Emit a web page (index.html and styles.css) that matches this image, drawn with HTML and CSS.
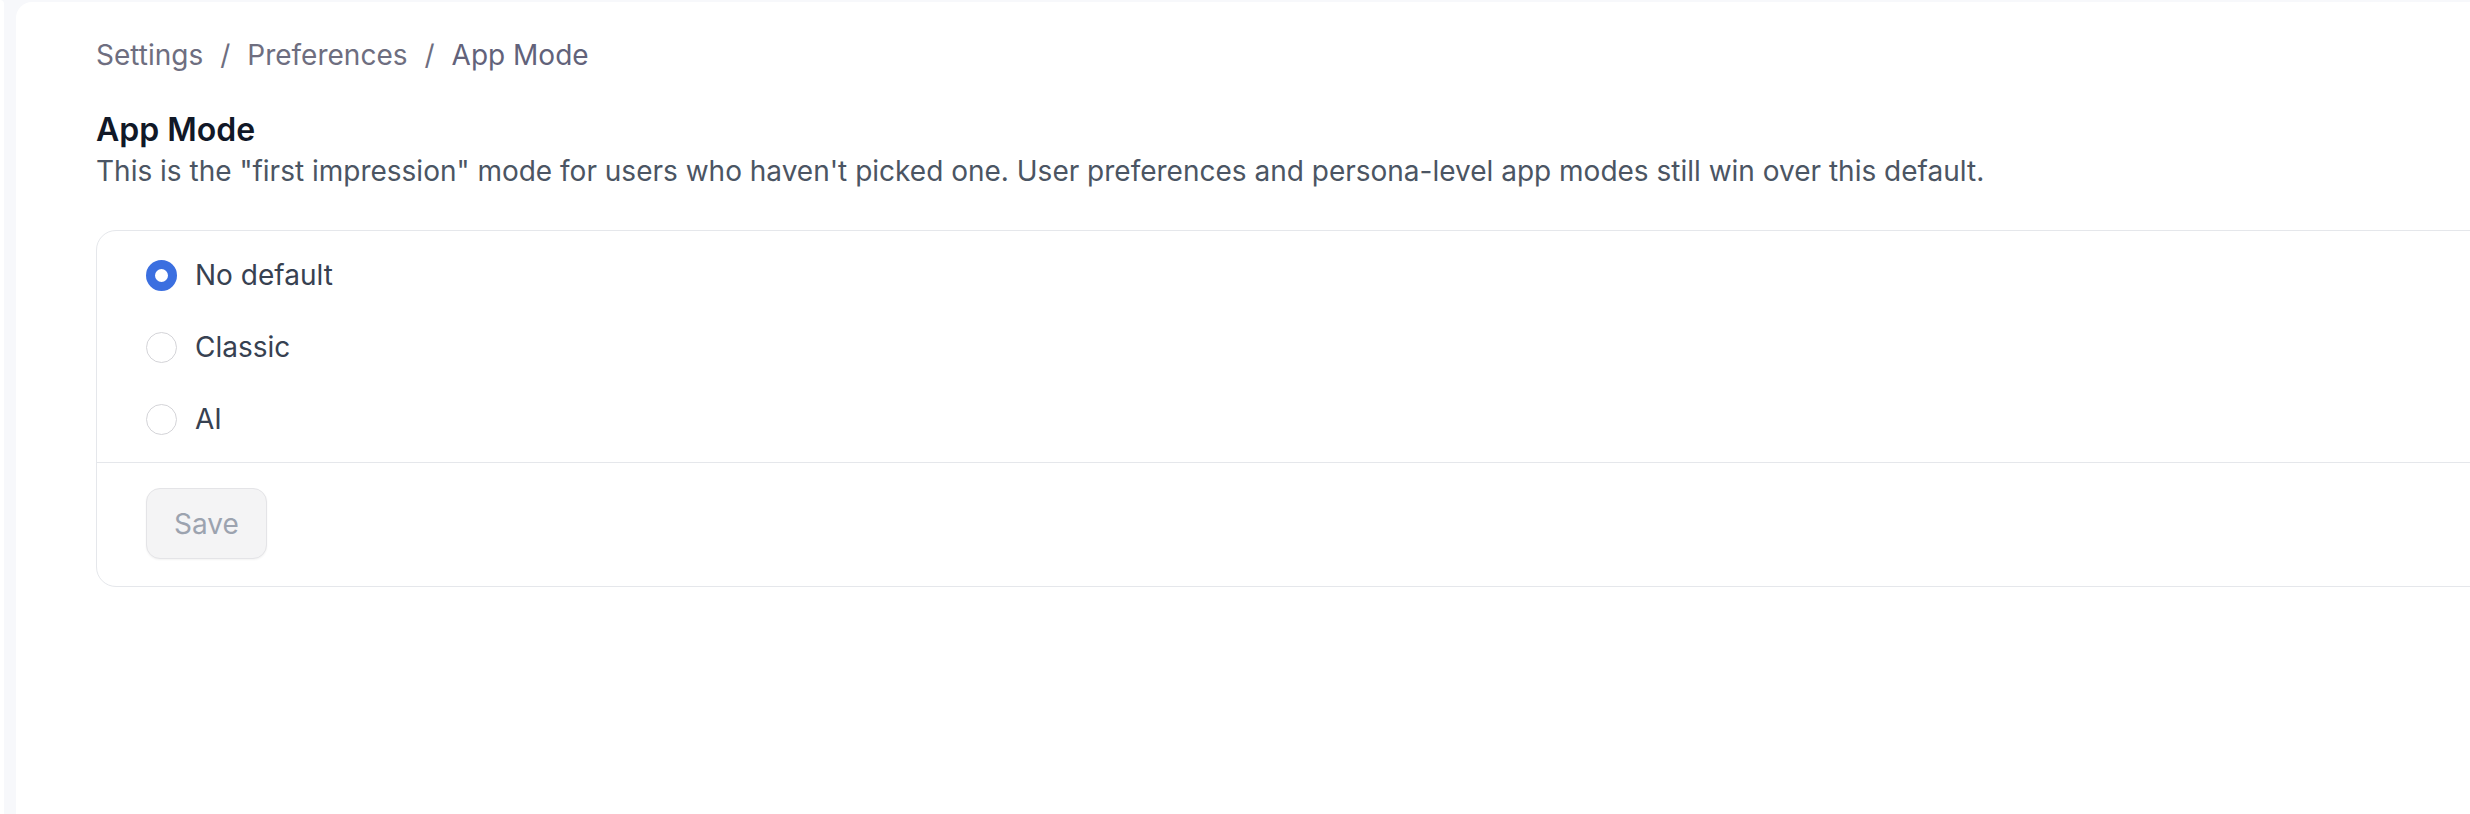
FILE: index.html
```html
<!DOCTYPE html>
<html lang="en">
<head>
<meta charset="utf-8">
<title>App Mode</title>
<link rel="stylesheet" href="styles.css">
</head>
<body>
<div class="layout">
  <aside class="sidebar"></aside>
  <main class="panel">
    <nav class="crumbs">
      <span class="crumb">Settings</span>
      <span class="sep">/</span>
      <span class="crumb">Preferences</span>
      <span class="sep">/</span>
      <span class="crumb current">App Mode</span>
    </nav>
    <h1 class="title">App Mode</h1>
    <p class="desc">This is the "first impression" mode for users who haven't picked one. User preferences and persona-level app modes still win over this default.</p>
    <section class="card">
      <div class="options">
        <label class="option">
          <span class="radio checked"></span>
          <span class="label">No default</span>
        </label>
        <label class="option">
          <span class="radio"></span>
          <span class="label">Classic</span>
        </label>
        <label class="option">
          <span class="radio"></span>
          <span class="label">AI</span>
        </label>
      </div>
      <div class="footer">
        <button class="save" disabled>Save</button>
      </div>
    </section>
  </main>
</div>
</body>
</html>
```

FILE: styles.css
```css
html, body {
  margin: 0;
  padding: 0;
  height: 100%;
}
body {
  background: #f7f8fb;
  font-family: Inter, "Noto Sans", sans-serif;
  overflow: hidden;
}
.layout {
  display: flex;
  gap: 12px;
  height: 100%;
}
.sidebar {
  width: 4px;
  flex: none;
  background: #ffffff;
  border-top-right-radius: 6px;
}
.panel {
  flex: none;
  width: 2600px;
  margin-top: 2px;
  background: #ffffff;
  border-top-left-radius: 16px;
  padding: 34px 0 0 80px;
  box-sizing: border-box;
}
.crumbs {
  display: flex;
  gap: 17px;
  font-size: 28px;
  line-height: 38px;
  color: #6e6e80;
}
.crumb.current {
  color: #62627a;
}
.title {
  margin: 36px 0 0;
  font-size: 32px;
  line-height: 40px;
  font-weight: 600;
  color: #111827;
}
.desc {
  margin: 2px 0 0;
  font-size: 28px;
  line-height: 38px;
  color: #4b5563;
}
.card {
  margin-top: 40px;
  border: 1.5px solid #e5e7eb;
  border-radius: 20px;
  width: 2500px;
}
.options {
  display: flex;
  flex-direction: column;
  gap: 32px;
  padding: 24px 49px 23px;
  border-bottom: 1.5px solid #e5e7eb;
}
.option {
  display: flex;
  align-items: center;
  gap: 18px;
  height: 40px;
}
.radio {
  width: 31px;
  height: 31px;
  box-sizing: border-box;
  border-radius: 50%;
  border: 1.5px solid #d4d4d8;
  background: #ffffff;
  flex: none;
}
.radio.checked {
  border: 9.5px solid #3b6fe0;
  background: #ffffff;
}
.label {
  font-size: 28px;
  color: #374151;
}
.footer {
  padding: 25px 49px 27px;
}
.save {
  font-family: inherit;
  font-size: 28px;
  width: 121px;
  height: 71px;
  border-radius: 14px;
  border: 1.5px solid #e4e4e7;
  background: #f4f4f5;
  color: #9ca3af;
  box-shadow: 0 1px 2px rgba(0, 0, 0, 0.05);
  padding: 0;
}
```
